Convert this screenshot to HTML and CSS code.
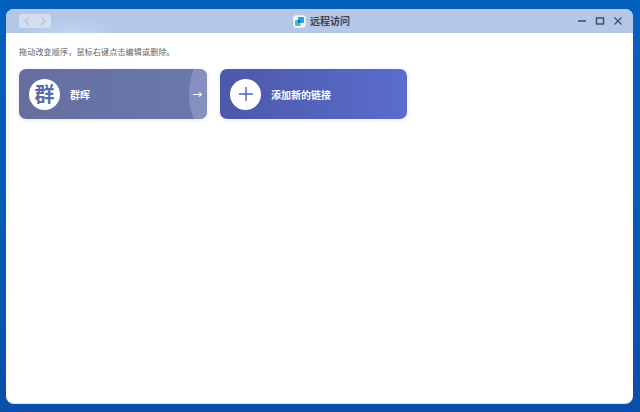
FILE: index.html
```html
<!DOCTYPE html>
<html lang="zh">
<head>
<meta charset="utf-8">
<title>远程访问</title>
<link rel="stylesheet" href="styles.css">
</head>
<body>
<main class="window">
  <header class="titlebar">
    <div class="nav">
      <span class="nav-btn"><svg width="8" height="10" viewBox="0 0 8 10"><path d="M6 1 2 5l4 4" class="nav-stroke"/></svg></span>
      <span class="nav-btn"><svg width="8" height="10" viewBox="0 0 8 10"><path d="M2 1l4 4-4 4" class="nav-stroke"/></svg></span>
    </div>
    <div class="title">
      <svg class="app-icon" width="13" height="13" viewBox="0 0 13 13">
        <rect x="0.3" y="0.3" width="12.4" height="12.4" rx="3.2" fill="#f6f8fc" stroke="#dfe5ef" stroke-width="0.6"/>
        <path d="M5 2h5a1 1 0 0 1 1 1v4a1 1 0 0 1-1 1H5z" fill="#2f9fe0"/>
        <path d="M2 6a1 1 0 0 1 1-1h4.500v6H3a1 1 0 0 1-1-1z" fill="#30c8c0"/>
        <path d="M5 5h2.500v3H5z" fill="#1b6aa8"/>
      </svg>
      <span class="title-text">远程访问</span>
    </div>
    <div class="controls">
      <svg width="10" height="10" viewBox="0 0 10 10"><path d="M1 5h8" class="ctl"/></svg>
      <svg width="10" height="10" viewBox="0 0 10 10"><rect x="1.500" y="2" width="7" height="6" class="ctl ctl-box"/></svg>
      <svg width="10" height="10" viewBox="0 0 10 10"><path d="M1.500 1.500l7 7M8.500 1.500l-7 7" class="ctl ctl-thin"/></svg>
    </div>
  </header>
  <section class="content">
    <p class="hint">拖动改变顺序，鼠标右键点击编辑或删除。</p>
    <div class="cards">
      <article class="card card-link">
        <span class="badge badge-text">群</span>
        <span class="card-label">群晖</span>
        <span class="go"><span class="arrow">→</span></span>
      </article>
      <article class="card card-add">
        <span class="badge">
          <svg width="14" height="14" viewBox="0 0 14 14"><path d="M7 0v14M0 7h14" class="plus"/></svg>
        </span>
        <span class="card-label">添加新的链接</span>
      </article>
    </div>
  </section>
</main>
</body>
</html>
```
FILE: styles.css
```css
* { box-sizing: border-box; }
html, body { height: 100%; }
body {
  margin: 0;
  padding: 9px 7px 8px 6px;
  overflow: hidden;
  background: linear-gradient(180deg, #0361bd 0%, #045cb5 50%, #0b4ea8 100%);
  font-family: "Noto Sans CJK SC", "Liberation Sans", sans-serif;
}
.window {
  height: 395px;
  border-radius: 8px;
  overflow: hidden;
  background: #fff;
  display: flex;
  flex-direction: column;
  border-bottom: 1px solid #dce1ea;
}
.titlebar {
  flex: 0 0 24px;
  background: radial-gradient(ellipse 45px 16px at 66px 24px, #c2d3ee, transparent), #b3c8e9;
  display: flex;
  align-items: center;
  justify-content: space-between;
  padding: 0 10px 0 13px;
  position: relative;
}
.nav {
  display: flex;
  width: 32px;
  height: 14px;
  background: #d3dff1;
  border-radius: 3px;
}
.nav-btn {
  flex: 1;
  display: flex;
  align-items: center;
  justify-content: center;
}
.nav-stroke { fill: none; stroke: #b4c0d3; stroke-width: 1.2; }
.title {
  display: flex;
  align-items: center;
  gap: 4px;
  position: absolute;
  left: 287px;
  top: 4px;
}
.title-text { font-size: 10px; line-height: 16px; color: #3d4350; font-weight: 700; }
.controls { display: flex; gap: 8px; align-items: center; }
.ctl { fill: none; stroke: #3f4654; stroke-width: 1.6; }
.ctl-box { stroke-width: 1.4; }
.ctl-thin { stroke-width: 1.1; }
.content { flex: 1; padding: 12px 13px; }
.hint { margin: 0 0 10px; font-size: 8px; letter-spacing: .2px; line-height: 14px; color: #5d6269; }
.cards { display: flex; gap: 13px; }
.card {
  position: relative;
  width: 188px;
  height: 50px;
  border-radius: 7px;
  display: flex;
  align-items: center;
  gap: 10px;
  padding-left: 10px;
  overflow: hidden;
  box-shadow: 0 1px 4px rgba(110, 120, 170, .18);
}
.card-link { background: linear-gradient(90deg, #656e9e, #6b78ad); }
.card-add { background: linear-gradient(90deg, #4c58a9, #5a6ccd); width: 187px; }
.badge {
  width: 31px;
  height: 31px;
  border-radius: 50%;
  background: #fff;
  display: flex;
  align-items: center;
  justify-content: center;
  flex: none;
}
.badge-text { font-size: 20px; font-weight: 700; color: #5b6ba6; line-height: 1; }
.card-label { font-size: 10px; font-weight: 700; color: #fff; line-height: 14px; padding-top: 2px; }
.go {
  position: absolute;
  right: -30px;
  top: -16px;
  width: 48px;
  height: 82px;
  border-radius: 50%;
  background: #858fc0;
  display: flex;
  align-items: center;
  padding-left: 3px;
}
.arrow { font-size: 12px; line-height: 1; color: #fff; font-family: "DejaVu Sans", sans-serif; }
.plus { fill: none; stroke: #4d64c0; stroke-width: 1.4; }
```
